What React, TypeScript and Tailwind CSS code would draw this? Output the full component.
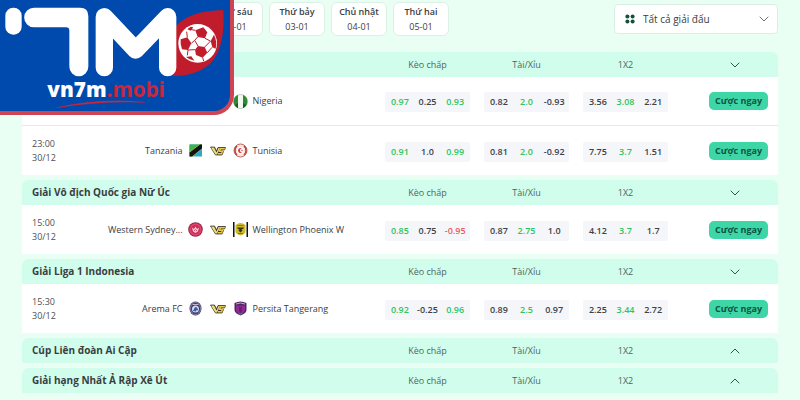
import { ReactNode, useState } from "react"
import { ChevronDown, ChevronUp } from "lucide-react"

type Match = {
  time?: string
  date?: string
  home?: string
  homeIcon?: ReactNode
  away: string
  awayIcon: ReactNode
  odds: string[][]
}

type League = { id: number; title: string; open: boolean; matches: Match[] }

const markets = ["Kèo chấp", "Tài/Xỉu", "1X2"]

const days = [
  { name: "Thứ sáu", date: "02-01" },
  { name: "Thứ bảy", date: "03-01" },
  { name: "Chủ nhật", date: "04-01" },
  { name: "Thứ hai", date: "05-01" },
]

const Nigeria = () => (
  <svg viewBox="0 0 30 30" className="h-[15px] w-[15px] shrink-0">
    <circle cx="15" cy="15" r="14" fill="#f4f7f0" stroke="#7d9c78" strokeWidth="1" />
    <path d="M10 2a14 14 0 0 0 0 26z" fill="#2f8a35" />
    <path d="M20 2a14 14 0 0 1 0 26z" fill="#2f8a35" />
    <path d="M4 22a14 14 0 0 0 6 6V18zM26 22a14 14 0 0 1-6 6V18z" fill="#1b5c22" />
  </svg>
)

const Tanzania = () => (
  <svg viewBox="0 0 30 30" className="h-[15px] w-[15px] shrink-0">
    <path d="M3 3h25v24H3z" fill="#2aa9cb" />
    <path d="M3 3h25L3 22z" fill="#3fb54a" />
    <path d="M3 27v-9L23 3h5v9L9 27z" fill="#e8d35a" />
    <path d="M3 27v-8L24 3h4v8L8 27z" fill="#101510" />
  </svg>
)

const Tunisia = () => (
  <svg viewBox="0 0 30 30" className="h-[15px] w-[15px] shrink-0">
    <circle cx="15" cy="15" r="13" fill="#f7e4e0" stroke="#c4645c" strokeWidth="2" />
    <path d="M8 6a12 12 0 0 0 0 18M22 6a12 12 0 0 1 0 18" stroke="#b9433d" strokeWidth="3" fill="none" />
    <circle cx="15" cy="15" r="7" fill="#fff" />
    <path d="M18 11a5 5 0 1 0 0 8 4 4 0 1 1 0-8z" fill="#d2453f" />
    <circle cx="18" cy="15" r="1.5" fill="#d2453f" />
  </svg>
)

const Sydney = () => (
  <svg viewBox="0 0 30 30" className="h-[15px] w-[15px] shrink-0">
    <circle cx="15" cy="15" r="14.5" fill="#8f2742" />
    <circle cx="15" cy="15" r="12.5" fill="#e2416a" />
    <circle cx="15" cy="15" r="9" fill="#c92c55" />
    <path d="M8 11l4 3 3-5 3 5 4-3-2 8-5 3-5-3z" fill="#f6c9d3" />
    <path d="M12 18l3-3 3 3" stroke="#c92c55" strokeWidth="1.5" fill="none" />
  </svg>
)

const Wellington = () => (
  <svg viewBox="0 0 30 30" className="h-[15px] w-[15px] shrink-0">
    <path d="M0 0h3v30H0zM27 0h3v30h-3z" fill="#111" />
    <path d="M5 6q10-8 20 0v13q0 5-10 8Q5 24 5 19z" fill="#cdb92c" />
    <path d="M8 11h14l-2 3h-3l2 3-4 4-4-4 2-3h-3z" fill="#37340f" />
    <path d="M9 7h12M10 23h10" stroke="#857820" strokeWidth="2" />
  </svg>
)

const Arema = () => (
  <svg viewBox="0 0 30 30" className="h-[15px] w-[15px] shrink-0">
    <ellipse cx="15" cy="15" rx="12" ry="14" fill="#343a72" />
    <ellipse cx="15" cy="15" rx="10" ry="12" fill="none" stroke="#b59bb4" strokeWidth="1.5" />
    <circle cx="15" cy="16" r="7" fill="#d5dcef" />
    <path d="M10 20l4-8 4 1 3 6-4-1-1 3z" fill="#3f57a5" />
    <path d="M9 7h12" stroke="#c9b7c8" strokeWidth="2" />
  </svg>
)

const Persita = () => (
  <svg viewBox="0 0 30 30" className="h-[15px] w-[15px] shrink-0">
    <path d="M3 4q12-6 24 0v14q0 6-12 11Q3 24 3 18z" fill="#532465" />
    <path d="M6 9h18v9q0 5-9 8-9-3-9-8z" fill="#8e2d91" />
    <path d="M6 6q9-4 18 0" stroke="#c9a6d0" strokeWidth="2" fill="none" />
    <path d="M12 10l3 3 3-3v10l-3 4-3-4z" fill="#6a1e72" />
    <path d="M11 26h8" stroke="#3c8f83" strokeWidth="2" />
  </svg>
)

const Versus = () => (
  <svg viewBox="0 0 32 20" className="h-[10px] w-4">
    <path
      d="M1 2h8l4 8 3-7h15l-2 5h-8l6 3-3 7H11z"
      fill="#3a3424"
      stroke="#3a3424"
      strokeWidth="1.5"
      strokeLinejoin="round"
    />
    <path d="M2 3h6l5 10 4-9h3l-6 13h-3z" fill="#f1dc7c" />
    <path d="M20 4h10l-1 3h-7l-1 2h6l-3 8H15l1-3h6l1-2h-6z" fill="#eac94b" />
  </svg>
)

const Logo = () => (
  <svg
    viewBox="0 0 690 333"
    role="img"
    aria-label="vn7m.mobi"
    className="block h-[111px] w-[230px]"
  >
    <rect x="16" y="23" width="49" height="81" rx="24" fill="#fff" />
    <path
      d="M102 23H240Q265 23 265 48V200a28 28 0 0 1-57 0V92Q208 82 198 82H102a29 29 0 0 1 0-59z"
      fill="#fff"
    />
    <path d="M528 78Q570 32 670 30Q676 130 640 180Q600 228 520 228z" fill="#c01c2b" />
    <path
      d="M313 203V50L407 150L503 50V203"
      fill="none"
      stroke="#fff"
      strokeWidth="52"
      strokeLinecap="round"
      strokeLinejoin="round"
    />
    <circle cx="593" cy="130" r="58" fill="#fff" />
    <g fill="#c01c2b">
      <path d="M586 91l24-9 12 15-7 18-22-4z" />
      <path d="M542 118l20-6 12 18-10 20-18-2q-6-16-4-30z" />
      <path d="M594 138l20 3 8 17-14 15-20-8-3-16z" />
      <path d="M642 104q10 20 5 42l-10-4-5-19z" />
      <path d="M558 171l16-2 9 13q-14-2-25-11zM562 88l10-8 8 2-8 10z" />
    </g>
    <path
      d="M593 111l-9 10-10 9M564 150l-2 16M564 150l21-1M615 115l16 8M622 158l14-16M608 173l3 10M562 112l-2-17M586 91l-16-3M594 138l-10-17M614 141l18-18"
      stroke="#c01c2b"
      strokeWidth="3"
      fill="none"
    />
    <text
      x="142"
      y="291"
      fontSize="62"
      fontWeight="800"
      className="font-['Open_Sans',sans-serif]"
    >
      <tspan fill="#fff">vn7m</tspan>
      <tspan fill="#c9283c" fontWeight="700">
        .mobi
      </tspan>
    </text>
    <path d="M170 323Q300 293 435 307Q300 302 170 323z" fill="#c9283c" stroke="#c9283c" />
  </svg>
)

const initialLeagues: League[] = [
  {
    id: 1,
    title: "",
    open: true,
    matches: [
      {
        away: "Nigeria",
        awayIcon: <Nigeria />,
        odds: [
          ["0.97", "0.25", "0.93"],
          ["0.82", "2.0", "-0.93"],
          ["3.56", "3.08", "2.21"],
        ],
      },
      {
        time: "23:00",
        date: "30/12",
        home: "Tanzania",
        homeIcon: <Tanzania />,
        away: "Tunisia",
        awayIcon: <Tunisia />,
        odds: [
          ["0.91", "1.0", "0.99"],
          ["0.81", "2.0", "-0.92"],
          ["7.75", "3.7", "1.51"],
        ],
      },
    ],
  },
  {
    id: 2,
    title: "Giải Vô địch Quốc gia Nữ Úc",
    open: true,
    matches: [
      {
        time: "15:00",
        date: "30/12",
        home: "Western Sydney...",
        homeIcon: <Sydney />,
        away: "Wellington Phoenix W",
        awayIcon: <Wellington />,
        odds: [
          ["0.85", "0.75", "-0.95"],
          ["0.87", "2.75", "1.0"],
          ["4.12", "3.7", "1.7"],
        ],
      },
    ],
  },
  {
    id: 3,
    title: "Giải Liga 1 Indonesia",
    open: true,
    matches: [
      {
        time: "15:30",
        date: "30/12",
        home: "Arema FC",
        homeIcon: <Arema />,
        away: "Persita Tangerang",
        awayIcon: <Persita />,
        odds: [
          ["0.92", "-0.25", "0.96"],
          ["0.89", "2.5", "0.97"],
          ["2.25", "3.44", "2.72"],
        ],
      },
    ],
  },
  { id: 4, title: "Cúp Liên đoàn Ai Cập", open: false, matches: [] },
  { id: 5, title: "Giải hạng Nhất Ả Rập Xê Út", open: false, matches: [] },
]

// handicap prices are coloured on the outside, the other markets in the middle
const oddColor = (value: string, market: number, index: number) => {
  const highlighted = market === 0 ? index !== 1 : index === 1
  if (!highlighted) return "text-[#3f4146]"
  return value.startsWith("-") ? "text-[#ee5a62]" : "text-[#2fc45c]"
}

const MatchRow = ({ match }: { match: Match }) => (
  <tr className="group h-[49px]">
    <td className="border-b border-[#e6e8ea] pl-[10px] text-[#4d5054] leading-[14px] group-last:border-none">
      <p>{match.time}</p>
      <p>{match.date}</p>
    </td>
    <td className="border-b border-[#e6e8ea] pr-[25px] group-last:border-none">
      <div className="grid grid-cols-[1fr_16px_1fr] items-center gap-[7px] font-medium whitespace-nowrap">
        <div className="flex items-center justify-end gap-[5px]">
          <p>{match.home}</p>
          {match.homeIcon}
        </div>
        {match.home ? <Versus /> : <span />}
        <div className="flex items-center gap-[5px]">
          {match.awayIcon}
          <p>{match.away}</p>
        </div>
      </div>
    </td>
    {match.odds.map((values, market) => (
      <td
        key={market}
        className="border-b border-[#e6e8ea] px-[7px] pt-0.5 group-last:border-none"
      >
        <div className="grid h-5 grid-cols-3 items-center rounded-xs bg-[#f5f6fa] px-px text-center font-semibold">
          {values.map((value, i) => (
            <span key={i} className={oddColor(value, market, i)}>
              {value}
            </span>
          ))}
        </div>
      </td>
    ))}
    <td className="border-b border-[#e6e8ea] pr-[10px] text-right group-last:border-none">
      <button className="h-[18px] w-[59px] rounded-[5px] bg-[#3ed6a6] align-middle font-bold text-[#0c5443] hover:bg-[#35c497] cursor-pointer">
        Cược ngay
      </button>
    </td>
  </tr>
)

const LeagueTable = ({ league, toggle }: { league: League; toggle: () => void }) => (
  <table className="w-full table-fixed border-separate border-spacing-0 bg-white rounded-t-md">
    <colgroup>
      <col className="w-[60px]" />
      <col />
      <col className="w-[99px]" />
      <col className="w-[99px]" />
      <col className="w-[99px]" />
      <col className="w-[103px]" />
    </colgroup>
    <thead>
      <tr className="h-[25px]">
        <th
          colSpan={2}
          className="rounded-tl-md bg-[#d1feec] pl-[10px] text-left text-[10px] font-bold"
        >
          {league.title}
        </th>
        {markets.map((m) => (
          <th key={m} className="bg-[#d1feec] font-normal text-[#4f6660]">
            {m}
          </th>
        ))}
        <th className="rounded-tr-md bg-[#d1feec] pr-[35px] text-right">
          <button
            onClick={toggle}
            aria-label={league.open ? "Thu gọn" : "Mở rộng"}
            className="block ml-auto cursor-pointer text-[#35544c]"
          >
            {league.open ? (
              <ChevronDown size={16} strokeWidth={1.5} />
            ) : (
              <ChevronUp size={16} strokeWidth={1.5} />
            )}
          </button>
        </th>
      </tr>
    </thead>
    {league.open && (
      <tbody>
        {league.matches.map((match) => (
          <MatchRow key={match.away} match={match} />
        ))}
      </tbody>
    )}
  </table>
)

const App = () => {
  const [leagues, setLeagues] = useState(initialLeagues)

  const toggle = (id: number) =>
    setLeagues(leagues.map((l) => (l.id === id ? { ...l, open: !l.open } : l)))

  return (
    <div className="relative min-h-screen bg-[#e9fff4] px-[22px] pt-0.5 pb-[7px] font-['Open_Sans',sans-serif] text-[9px] text-[#3a3d42]">
      <div className="flex items-start justify-between pb-4 pl-[185px]">
        <div className="flex gap-1.5">
          {days.map((day) => (
            <button
              key={day.date}
              className="h-[34px] w-14 rounded-md border border-[#dcf1e6] bg-white leading-[15px] cursor-pointer"
            >
              <p className="font-semibold">{day.name}</p>
              <p>{day.date}</p>
            </button>
          ))}
        </div>
        <div className="relative mt-0.5 w-[164px]">
          <select
            aria-label="Giải đấu"
            className="h-[30px] w-full appearance-none rounded-sm border border-[#d9efe3] bg-white pl-7 text-[10px]"
          >
            <option>Tất cả giải đấu</option>
          </select>
          <svg
            viewBox="0 0 10 10"
            className="pointer-events-none absolute top-[10px] left-[11px] h-[10px] w-[10px] fill-[#134f3c]"
          >
            <circle cx="2.4" cy="2.4" r="2" />
            <circle cx="7.6" cy="2.4" r="2" />
            <circle cx="2.4" cy="7.6" r="2" />
            <circle cx="7.6" cy="7.6" r="2" />
          </svg>
          <ChevronDown
            size={16}
            strokeWidth={1.25}
            className="pointer-events-none absolute top-[7px] right-[6px] text-[#55585c]"
          />
        </div>
      </div>
      <main className="flex flex-col gap-[5px]">
        {leagues.map((league) => (
          <LeagueTable key={league.id} league={league} toggle={() => toggle(league.id)} />
        ))}
      </main>
      <a
        href="#"
        className="absolute top-0 left-0 rounded-br-[20px] border-r-4 border-b-4 border-[#cf4453] bg-[#004aad]"
      >
        <Logo />
      </a>
    </div>
  )
}

export default App
